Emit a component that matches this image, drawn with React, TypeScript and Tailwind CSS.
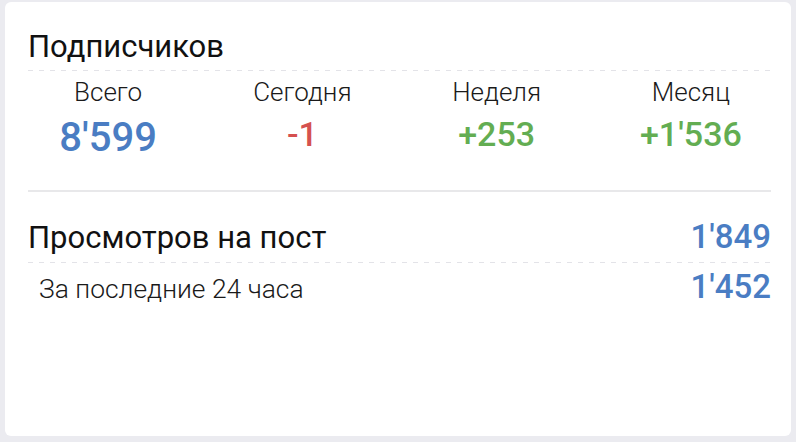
import React from 'react';

// Пунктирный разделитель
function Dashed({ className = '' }: { className?: string }) {
  return (
    <div
      className={`h-px bg-[linear-gradient(to_right,#e3e3e8_50%,transparent_50%)] bg-[length:11px_1px] bg-repeat-x ${className}`}
    />
  );
}

const STATS = [
  { label: 'Всего', value: "8'599", color: 'text-[#4a7dc3]', size: 'text-[40px] leading-[44px]' },
  { label: 'Сегодня', value: '-1', color: 'text-[#d5514f]', size: 'text-[34px] leading-[36px]' },
  { label: 'Неделя', value: '+253', color: 'text-[#63ad52]', size: 'text-[34px] leading-[36px]' },
  { label: 'Месяц', value: "+1'536", color: 'text-[#63ad52]', size: 'text-[34px] leading-[36px]' },
];

export default function App() {
  return (
    <div
      className="min-h-screen bg-[#ebebf0] pt-[2px] pl-[5px]"
      style={{ fontFamily: 'Roboto, "Noto Sans", sans-serif' }}
    >
      <div className="h-[434px] w-[786px] rounded-[6px] bg-white pl-[23px] pr-[20px] pt-[27px]">
        {/* Подписчики */}
        <div className="text-[31px] leading-[36px] text-[#111]">Подписчиков</div>
        <Dashed className="mt-[5px]" />
        <div className="-mx-[17px] mt-[6px] grid grid-cols-4">
          {STATS.map((s) => (
            <div key={s.label} className="flex flex-col items-center">
              <span className="text-[26px] font-light leading-[30px] text-[#1a1a1a]">{s.label}</span>
              <span className={`mt-[9px] font-medium ${s.size} ${s.color}`}>{s.value}</span>
            </div>
          ))}
        </div>
        <div className="mt-[30px] h-[2px] bg-[#e8e8ea]" />

        {/* Просмотры */}
        <div className="mt-[27px] flex items-baseline justify-between">
          <span className="text-[31px] leading-[36px] text-[#111]">Просмотров на пост</span>
          <span className="text-[33px] font-medium leading-[36px] text-[#4a7dc3]">1'849</span>
        </div>
        <Dashed className="mt-[6px]" />
        <div className="mt-[9px] flex items-baseline justify-between pl-[11px]">
          <span className="text-[26.4px] font-light leading-[30px] text-[#1a1a1a]">За последние 24 часа</span>
          <span className="text-[33px] font-medium leading-[30px] text-[#4a7dc3]">1'452</span>
        </div>
      </div>
    </div>
  );
}
